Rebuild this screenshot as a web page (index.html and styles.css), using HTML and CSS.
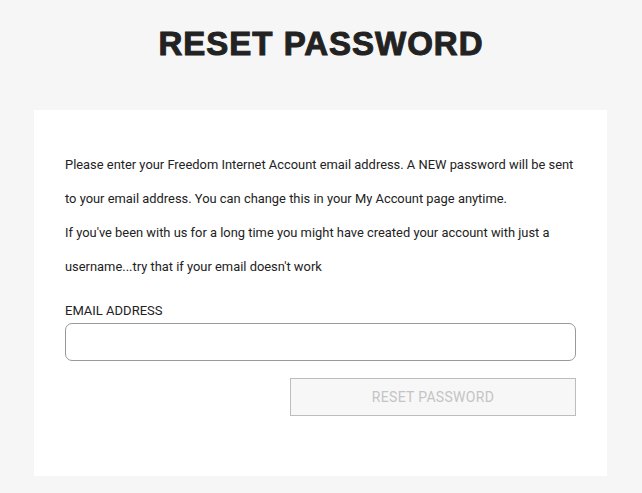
FILE: index.html
```html
<!DOCTYPE html>
<html lang="en">

<head>
    <meta charset="UTF-8">
    <meta name="viewport" content="width=device-width, initial-scale=1.0">
    <title>Reset Password</title>
    <link rel="stylesheet" href="styles.css">
</head>

<body>
    <h1 class="page-title">RESET PASSWORD</h1>

    <div class="reset-card">
        <p class="intro">Please enter your Freedom Internet Account email address. A NEW password will be sent to your email address. You can change this in your My Account page anytime.</p>
        <p class="intro">If you've been with us for a long time you might have created your account with just a username...try that if your email doesn't work</p>

        <form class="reset-form">
            <label for="email" class="field-label">EMAIL ADDRESS</label>
            <input type="email" id="email" class="field-input">
            <div class="form-actions">
                <button type="button" class="reset-button" disabled>RESET PASSWORD</button>
            </div>
        </form>
    </div>
</body>

</html>
```

FILE: styles.css
```css
body {
    font-family: Roboto, "Liberation Sans", Arial, sans-serif;
    margin: 0;
    padding: 0;
    background-color: #f6f6f6;
    color: #222;
}

.page-title {
    margin: 0;
    padding-top: 25px;
    text-align: center;
    font-family: "Liberation Sans", Arial, sans-serif;
    font-size: 33px;
    font-weight: bold;
    line-height: 38px;
    letter-spacing: 1px;
    color: #222;
    -webkit-text-stroke: 1px #222;
}

.reset-card {
    background-color: #fff;
    margin: 47px 35px 17px 34px;
    padding: 38px 31px 60px 31px;
}

.intro {
    margin: 0;
    font-size: 12.9px;
    line-height: 34px;
}

.reset-form {
    margin-top: 19px;
}

.field-label {
    display: block;
    font-size: 13px;
    line-height: 16px;
    margin-top: 1px;
    margin-bottom: 4px;
}

.field-input {
    display: block;
    box-sizing: border-box;
    width: 100%;
    height: 38px;
    border: 1px solid #999;
    border-radius: 7px;
    padding: 0 10px;
    font-size: 14px;
    background: #fff;
}

.form-actions {
    display: flex;
    justify-content: flex-end;
    margin-top: 17px;
}

.reset-button {
    box-sizing: border-box;
    width: 286px;
    height: 38px;
    border: 1px solid #bdbdbd;
    border-radius: 0;
    background-color: #f7f7f7;
    color: #c4c4c4;
    font-family: Roboto, "Liberation Sans", Arial, sans-serif;
    font-size: 14px;
    letter-spacing: 0.3px;
}
```
